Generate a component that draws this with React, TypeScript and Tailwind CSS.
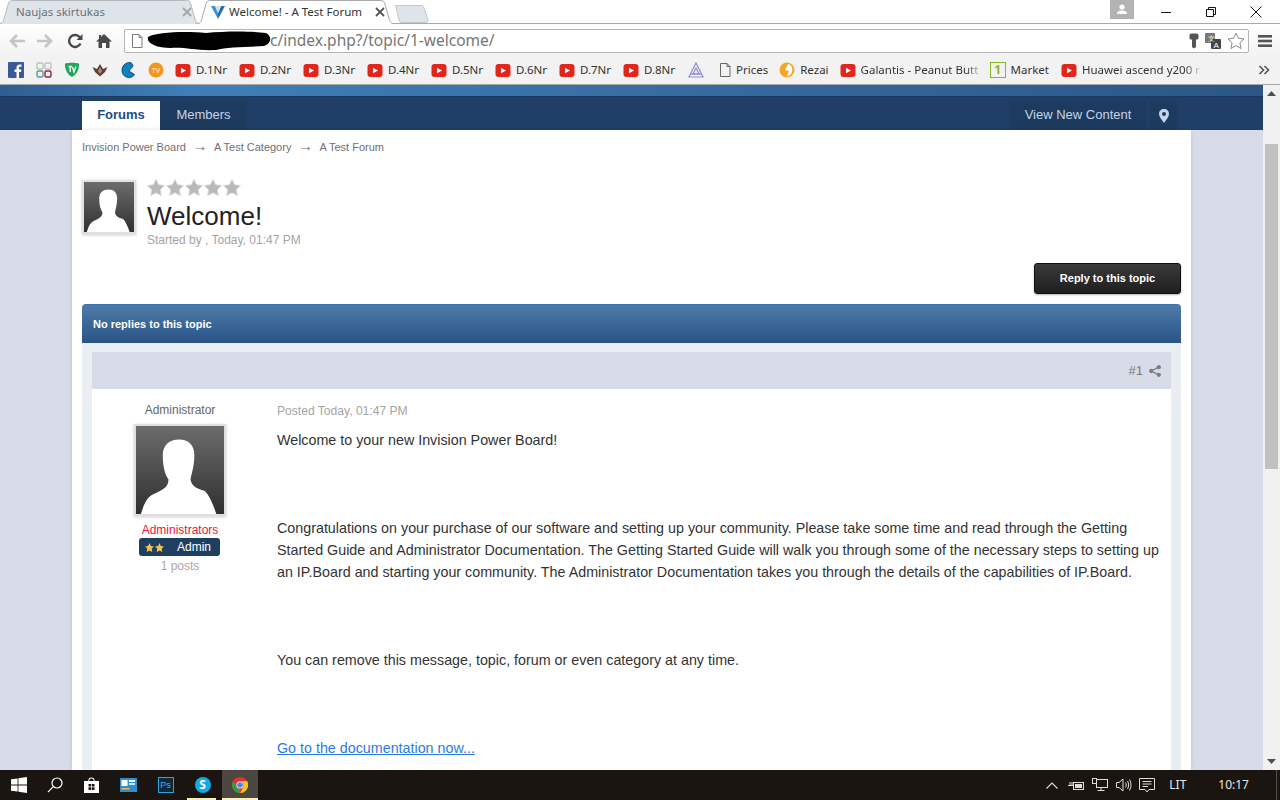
import React from 'react';

const UI = '"Noto Sans", "Open Sans", sans-serif';

const YouTubeIcon = () => (
  <svg width="16" height="13" viewBox="0 0 16 13" className="shrink-0">
    <rect x="0.5" y="0" width="15" height="13" rx="3" fill="#e1261c" />
    <path d="M6 3.8 L11 6.5 L6 9.2 Z" fill="#fff" />
  </svg>
);

const PageIcon = () => (
  <svg width="16" height="16" viewBox="0 0 16 16" className="shrink-0" fill="none" stroke="#666" strokeWidth="1">
    <path d="M3.5 1.5 H10 L13 4.5 V14.5 H3.5 Z M10 1.5 V4.5 H13" />
  </svg>
);

const Silhouette = ({ id }: { id: string }) => (
  <svg viewBox="0 0 92 92" className="block w-full h-full">
    <defs>
      <linearGradient id={id} x1="0" y1="0" x2="0" y2="1">
        <stop offset="0" stopColor="#6c6c6c" />
        <stop offset="1" stopColor="#303030" />
      </linearGradient>
    </defs>
    <rect width="92" height="92" fill={`url(#${id})`} />
    <path
      d="M5 92 C8 84 10 76 17 72 C24 68 34 66 34 56 C30 50 28 42 28 30 C28 20 35 14 45 14 C55 14 61 20 61 30 C61 42 58 50 57 56 C58 64 66 66 72 68 C76 72 80 80 84 92 Z"
      fill="#fff"
    />
  </svg>
);

const Star = () => (
  <svg width="18" height="17" viewBox="0 0 18 17">
    <path d="M9 0.5 L11.6 5.8 L17.5 6.6 L13.2 10.7 L14.3 16.5 L9 13.7 L3.7 16.5 L4.8 10.7 L0.5 6.6 L6.4 5.8 Z" fill="#b9b9b9" stroke="#d6d6d6" strokeWidth="1" />
  </svg>
);

const TabShape = ({ active }: { active?: boolean }) => (
  <svg className="absolute inset-0 w-full h-full" viewBox="0 0 200 24" preserveAspectRatio="none">
    <path
      d="M0 24 C5 24 6 22 7 18 L11 4 C12 1 13 0.5 16 0.5 H184 C187 0.5 188 1 189 4 L193 18 C194 22 195 24 200 24"
      fill={active ? '#ffffff' : '#dfe3ea'}
      stroke={active ? '#a8a8a8' : '#b4b8bf'}
      strokeWidth="1"
      vectorEffect="non-scaling-stroke"
    />
  </svg>
);

const CloseX = ({ color }: { color: string }) => (
  <svg width="10" height="10" viewBox="0 0 10 10" className="shrink-0" stroke={color} strokeWidth="1.8">
    <path d="M1 1 L9 9 M9 1 L1 9" />
  </svg>
);

const bookmarksLeft = [
  <svg key="fb" width="16" height="16" viewBox="0 0 16 16"><rect width="16" height="16" rx="1" fill="#3b5998" /><path d="M11 16 V10 H13 L13.4 7.5 H11 V6 C11 5.2 11.3 4.8 12.2 4.8 H13.5 V2.6 H11.6 C9.5 2.6 8.5 3.9 8.5 5.7 V7.5 H6.5 V10 H8.5 V16 Z" fill="#fff" /></svg>,
  <svg key="grid" width="16" height="16" viewBox="0 0 16 16" fill="none" strokeWidth="1.4"><rect x="1" y="1" width="6" height="6" rx="1.5" stroke="#b8c8a0" /><rect x="9" y="1" width="6" height="6" rx="1.5" stroke="#c0c0c0" /><rect x="1" y="9" width="6" height="6" rx="1.5" stroke="#5a9a9a" /><rect x="9" y="9" width="6" height="6" rx="1.5" stroke="#8a2a3a" /></svg>,
  <svg key="tv" width="16" height="16" viewBox="0 0 16 16"><path d="M1 1.5 C5 0.5 11 0.5 15 1.5 C15.5 8 12 13 8 15 C4 13 0.5 8 1 1.5 Z" fill="#1fa85a" /><path d="M4.5 4.5 H8 M6.2 4.5 V10 M8.5 5 L10 10 L12 4.5" stroke="#fff" strokeWidth="1.3" fill="none" /></svg>,
  <svg key="wing" width="16" height="16" viewBox="0 0 16 16"><path d="M0.5 5 L5 7 L8 2 L11 7 L15.5 5 L13 10 L8 14.5 L3 10 Z" fill="#5d4033" /><path d="M8 5 L10 9 L8 12 L6 9 Z" fill="#b08a70" /></svg>,
  <svg key="pac" width="16" height="16" viewBox="0 0 16 16"><path d="M10 0.5 C5 0.5 2 4 2 8.5 C2 13 5.5 15.5 9 15.5 C12 15.5 14 14 14.5 12.5 L9 9 L13 4 C12.5 2 11.5 0.5 10 0.5 Z" fill="#0d80c4" stroke="#063a5c" strokeWidth="0.8" /></svg>,
  <svg key="otv" width="16" height="16" viewBox="0 0 16 16"><circle cx="8" cy="8" r="7.5" fill="#f7941e" /><text x="8" y="10.5" textAnchor="middle" fontSize="6.5" fill="#fff" fontFamily="Liberation Sans, sans-serif">TV</text></svg>,
];

const dayBookmarks = ['D.1Nr', 'D.2Nr', 'D.3Nr', 'D.4Nr', 'D.5Nr', 'D.6Nr', 'D.7Nr', 'D.8Nr'];

const App: React.FC = () => {
  return (
    <div className="w-[1280px] h-[800px] flex flex-col overflow-hidden bg-white" style={{ fontFamily: '"Liberation Sans", Arial, sans-serif' }}>
      {/* window title + tabs */}
      <div className="h-[24px] shrink-0 flex items-end relative" style={{ fontFamily: UI }}>
        <div className="absolute left-0 right-0 bottom-0 h-px bg-[#a8a8a8]" />
        <div className="relative w-[205px] h-[24px] -ml-[3px] flex items-center pl-[19px] pr-[10px] text-[11.5px] text-[#6b7078]">
          <TabShape />
          <span className="relative flex-1">Naujas skirtukas</span>
          <span className="relative"><CloseX color="#a4a4a4" /></span>
        </div>
        <div className="relative w-[201px] h-[24px] -ml-[7px] flex items-center pl-[16px] pr-[11px] text-[11.5px] text-[#333]">
          <TabShape active />
          <svg width="14" height="14" viewBox="0 0 14 14" className="relative shrink-0">
            <path d="M0 1 H4 L7 8 V14 Z" fill="#3d8fd1" />
            <path d="M14 1 H10 L7 8 V14 Z" fill="#2b6ea6" />
            <path d="M4 1 H10 L7 8 Z" fill="#cfe3f3" />
          </svg>
          <span className="relative flex-1 ml-[4px] whitespace-nowrap">Welcome! - A Test Forum</span>
          <span className="relative"><CloseX color="#555" /></span>
        </div>
        <svg width="34" height="18" viewBox="0 0 34 18" className="mb-px ml-[-1px]">
          <path d="M0.5 0.5 H26 C28 0.5 28.5 1 29 3 L33 15 C33.3 17 32 17.5 30 17.5 H7 C5 17.5 4.5 17 4 15 Z" fill="#dfe3ea" stroke="#c4c8ce" />
        </svg>
        <div className="flex-1" />
        <div className="self-start w-[24px] h-[19px] bg-[#b3b3b3] flex items-center justify-center mr-[9px]">
          <svg width="12" height="11" viewBox="0 0 12 11" fill="#fff">
            <circle cx="6" cy="3" r="2.6" />
            <path d="M1 10 C1 7 3.5 6.5 6 6.5 C8.5 6.5 11 7 11 10 Z" />
          </svg>
        </div>
        <div className="self-start flex h-[24px] items-center pr-[2px]">
          <div className="w-[45px] flex justify-center">
            <svg width="10" height="10" viewBox="0 0 10 10" stroke="#111"><path d="M0 5.5 H10" /></svg>
          </div>
          <div className="w-[45px] flex justify-center">
            <svg width="10" height="10" viewBox="0 0 10 10" fill="none" stroke="#111"><path d="M0.5 2.5 H7.5 V9.5 H0.5 Z M2.5 2.5 V0.5 H9.5 V7.5 H7.5" /></svg>
          </div>
          <div className="w-[45px] flex justify-center">
            <svg width="12" height="12" viewBox="0 0 12 12" stroke="#111"><path d="M0.5 0.5 L11.5 11.5 M11.5 0.5 L0.5 11.5" /></svg>
          </div>
        </div>
      </div>

      {/* toolbar */}
      <div className="h-[34px] shrink-0 flex items-center bg-gradient-to-b from-white to-[#f2f2f2]" style={{ fontFamily: UI }}>
        <div className="flex items-center w-[124px] shrink-0 pl-[8px]">
          <svg width="18" height="16" viewBox="0 0 18 16" fill="none" stroke="#c4c4c4" strokeWidth="2.6"><path d="M17 8 H3 M9 2 L3 8 L9 14" /></svg>
          <svg width="18" height="16" viewBox="0 0 18 16" fill="none" stroke="#c4c4c4" strokeWidth="2.6" className="ml-[10px]"><path d="M1 8 H15 M9 2 L15 8 L9 14" /></svg>
          <svg width="16" height="16" viewBox="0 0 16 16" fill="none" stroke="#4a4a4a" strokeWidth="2.4" className="ml-[13px]"><path d="M13.5 10.5 A6 6 0 1 1 13 4.5" /><path d="M15.5 1 V7 H9.5 Z" fill="#4a4a4a" stroke="none" /></svg>
          <svg width="16" height="16" viewBox="0 0 16 16" fill="#4a4a4a" className="ml-[13px]"><path d="M8 1 L16 8.5 H13.5 V15 H10 V10 H6 V15 H2.5 V8.5 H0 L3 5.7 V2 H5 V3.8 Z" /></svg>
        </div>
        <div className="h-[24px] w-[1125px] shrink-0 border border-[#b4b4b4] rounded-[2px] bg-white flex items-center relative">
          <svg width="14" height="16" viewBox="0 0 14 16" className="ml-[5px] shrink-0" fill="none" stroke="#7a7a7a"><path d="M2.5 1.5 H9 L12 4.5 V14.5 H2.5 Z M9 1.5 V4.5 H12" /></svg>
          <svg width="126" height="20" viewBox="0 0 126 20" className="ml-[2px] shrink-0">
            <path d="M2 6 C10 1 40 0 60 2 C80 0 105 0 120 2 C126 5 126 12 118 15 C100 16 80 16 70 19 C50 20 40 16 25 17 C10 17 0 12 2 6 Z" fill="#000" />
          </svg>
          <span className="text-[15.5px] leading-none text-[#767676] -ml-[2px] whitespace-nowrap">c/index.php?/topic/1-welcome/</span>
          <div className="flex-1" />
          <div className="flex items-center gap-[6px] pr-[3px]">
            <svg width="10" height="16" viewBox="0 0 10 16" fill="#555"><path d="M2.5 0.5 H7.5 C8.8 0.5 9.5 1.2 9.5 2.5 V5 C9.5 6 8.8 6.5 7 6.5 V14 L5 15.5 L3 14 V6.5 C1.2 6.5 0.5 6 0.5 5 V2.5 C0.5 1.2 1.2 0.5 2.5 0.5 Z" /></svg>
            <svg width="16" height="16" viewBox="0 0 16 16"><rect x="0" y="0" width="10" height="10" rx="1" fill="#777" /><rect x="6" y="6" width="10" height="10" rx="1" fill="#444" /><text x="3" y="8" fontSize="7" fill="#fff" fontFamily="Liberation Sans, sans-serif">文</text><text x="8.5" y="14.5" fontSize="8" fill="#fff" fontFamily="Liberation Sans, sans-serif">A</text></svg>
            <svg width="18" height="18" viewBox="0 0 18 18" fill="#fff" stroke="#8a8a8a"><path d="M9 1 L11.4 6.3 L17 7 L12.9 10.8 L14 16.5 L9 13.7 L4 16.5 L5.1 10.8 L1 7 L6.6 6.3 Z" /></svg>
          </div>
        </div>
        <div className="flex-1 flex justify-center">
          <svg width="14" height="12" viewBox="0 0 14 12" fill="#555"><rect y="0" width="14" height="2.6" /><rect y="4.7" width="14" height="2.6" /><rect y="9.4" width="14" height="2.6" /></svg>
        </div>
      </div>

      {/* bookmarks bar */}
      <div className="h-[27px] shrink-0 flex items-center bg-[#f2f2f2] border-b border-[#a8a8a8] pl-[2px] pb-[2px] text-[11.5px] text-[#333] overflow-hidden" style={{ fontFamily: UI }}>
        {bookmarksLeft.map((icon, i) => (
          <div key={i} className="px-[6px] flex items-center">{icon}</div>
        ))}
        {dayBookmarks.map((label) => (
          <div key={label} className="w-[64px] shrink-0 flex items-center gap-[5px] pl-[5px]">
            <YouTubeIcon />
            <span>{label}</span>
          </div>
        ))}
        <div className="px-[6px] w-[29px] shrink-0">
          <svg width="16" height="16" viewBox="0 0 16 16" fill="none" stroke="#8d8fd0" strokeWidth="1.2"><path d="M8 1 L15 15 H1 Z M8 6 L11 12 H5 Z" /><path d="M3 12 H13" /></svg>
        </div>
        <div className="flex items-center gap-[3px] pl-[6px] pr-[5px] shrink-0"><PageIcon /><span>Prices</span></div>
        <div className="flex items-center gap-[5px] px-[6px] shrink-0">
          <svg width="16" height="16" viewBox="0 0 16 16"><circle cx="8" cy="8" r="7.5" fill="#f5a623" /><path d="M9 2 C13 3 14 7 13 10 C12 13 10 14 8 14 L10 9 L6 8 Z" fill="#fff" /></svg>
          <span>Rezai</span>
        </div>
        <div className="flex items-center gap-[5px] pl-[5px] w-[149px] shrink-0">
          <YouTubeIcon />
          <span className="flex-1 min-w-0 whitespace-nowrap [mask-image:linear-gradient(to_right,black_85%,transparent)]">Galantis - Peanut Butt</span>
        </div>
        <div className="flex items-center gap-[5px] px-[6px] shrink-0">
          <div className="w-[16px] h-[16px] border border-[#8db51e] text-[#8db51e] font-bold text-[12px] leading-[14px] text-center">1</div>
          <span>Market</span>
        </div>
        <div className="flex items-center gap-[5px] pl-[6px] w-[148px] shrink-0">
          <YouTubeIcon />
          <span className="flex-1 min-w-0 whitespace-nowrap [mask-image:linear-gradient(to_right,black_85%,transparent)]">Huawei ascend y200 r</span>
        </div>
        <div className="flex-1" />
        <svg width="12" height="10" viewBox="0 0 12 10" fill="none" stroke="#555" strokeWidth="1.6" className="mr-[10px] shrink-0"><path d="M1.5 1 L5.5 5 L1.5 9 M6.5 1 L10.5 5 L6.5 9" /></svg>
      </div>

      {/* page + scrollbar */}
      <div className="flex-1 min-h-0 flex">
        <div className="w-[1263px] shrink-0 flex flex-col bg-[#d8dce8] overflow-hidden">
          <div className="h-[11px] shrink-0 bg-gradient-to-r from-[#2f5e92] via-[#3f7fb9] via-15% to-[#2c5687]" />
          <div className="h-[34px] shrink-0 bg-[#1f3f68] border-t border-[#1b3759] flex items-end pl-[82px] pr-[85px] text-[13px]">
            <div className="h-[29px] w-[78px] pb-px bg-white text-[#1d4e86] font-bold flex items-center justify-center">Forums</div>
            <div className="h-[29px] w-[87px] pb-px bg-[#1d3a5f] text-[#c5d4e8] flex items-center justify-center">Members</div>
            <div className="flex-1" />
            <div className="h-[29px] w-[136px] pb-px bg-[#1d3a5f] text-[#c5d4e8] flex items-center justify-center">View New Content</div>
            <div className="h-[29px] w-[29px] ml-[3px] bg-[#1d3a5f] flex items-center justify-center">
              <svg width="10" height="14" viewBox="0 0 10 14"><path fillRule="evenodd" d="M5 0 C8 0 10 2 10 5 C10 8 7 11 5 14 C3 11 0 8 0 5 C0 2 2 0 5 0 Z M5 3 A2 2 0 1 0 5 7 A2 2 0 1 0 5 3 Z" fill="#c5d4e8" /></svg>
            </div>
          </div>

          <div className="flex-1 min-h-0 w-[1119px] ml-[72px] bg-white px-[10px] shadow-[0_0_4px_rgba(0,0,0,0.12)] flex flex-col">
            <div className="flex items-center h-[34px] shrink-0 text-[11px] text-[#707070]">
              <span>Invision Power Board</span>
              <span className="mx-[6.5px] -mt-[4px] text-[15px] leading-none">→</span>
              <span>A Test Category</span>
              <span className="mx-[6.5px] -mt-[4px] text-[15px] leading-none">→</span>
              <span>A Test Forum</span>
            </div>

            <div className="flex mt-[16px] shrink-0">
              <div className="w-[54px] h-[54px] border-2 border-[#e0e0e0] shadow-[0_1px_3px_rgba(0,0,0,0.2)]">
                <Silhouette id="sil-small" />
              </div>
              <div className="ml-[11px]">
                <div className="flex gap-px h-[18px] -mt-px">
                  <Star /><Star /><Star /><Star /><Star />
                </div>
                <h1 className="text-[26px] leading-[36px] pt-px text-[#222]">Welcome!</h1>
                <div className="text-[12px] leading-[13px] text-[#a4a4a4]">Started by , Today, 01:47 PM</div>
              </div>
            </div>

            <div className="flex justify-end mt-[16px] shrink-0">
              <div className="h-[31px] w-[147px] rounded-[3px] bg-gradient-to-b from-[#3a3a3a] to-[#1f1f1f] border border-[#111] text-white font-bold text-[11px] flex items-center justify-center shadow-[0_1px_2px_rgba(0,0,0,0.3)]">
                Reply to this topic
              </div>
            </div>

            <div className="h-[39px] mt-[10px] shrink-0 rounded-t-[4px] bg-gradient-to-b from-[#4d7ba8] to-[#2a5488] border-t border-[#3a74ad] text-white font-bold text-[11px] flex items-center pl-[11px]">
              No replies to this topic
            </div>

            <div className="flex-1 min-h-0 bg-[#e9eef3] pt-[9px] px-[10px] overflow-hidden">
              <div className="h-[37px] bg-[#d8dce8] flex items-center justify-end pr-[10px] gap-[6px] text-[#7a7a7a] text-[13px]">
                <span>#1</span>
                <svg width="12" height="12" viewBox="0 0 12 12" fill="#7a7f88" stroke="#7a7f88" strokeWidth="1.3"><circle cx="9.8" cy="2.2" r="1.5" /><circle cx="2.2" cy="6" r="1.5" /><circle cx="9.8" cy="9.8" r="1.5" /><path d="M9.8 2.2 L2.2 6 L9.8 9.8" fill="none" /></svg>
              </div>
              <div className="bg-white flex h-[400px]">
                <div className="w-[176px] shrink-0 flex flex-col items-center pt-[14px]">
                  <div className="text-[12px] leading-[15px] text-[#666]">Administrator</div>
                  <div className="w-[92px] h-[92px] mt-[6px] border-2 border-[#e0e0e0] shadow-[0_1px_3px_rgba(0,0,0,0.2)]">
                    <Silhouette id="sil-large" />
                  </div>
                  <div className="text-[12px] leading-[14px] text-[#f0103c] mt-[7px]">Administrators</div>
                  <div className="w-[81px] h-[18px] rounded-[3px] bg-[#1f3f60] flex items-center pl-[6px] mt-px mr-px">
                    <span className="flex gap-[1px] text-[#f5c542]">
                      <svg width="9" height="9" viewBox="0 0 10 10" fill="currentColor"><path d="M5 0 L6.5 3.3 L10 3.8 L7.5 6.2 L8.1 10 L5 8.2 L1.9 10 L2.5 6.2 L0 3.8 L3.5 3.3 Z" /></svg>
                      <svg width="9" height="9" viewBox="0 0 10 10" fill="currentColor"><path d="M5 0 L6.5 3.3 L10 3.8 L7.5 6.2 L8.1 10 L5 8.2 L1.9 10 L2.5 6.2 L0 3.8 L3.5 3.3 Z" /></svg>
                    </span>
                    <span className="text-[12px] text-white ml-[13px]">Admin</span>
                  </div>
                  <div className="text-[12px] leading-[14px] mt-[3px] text-[#a8a8a8]">1 posts</div>
                </div>
                <div className="flex-1 pl-[9px] pr-[10px] pt-[15px] text-[14.3px] leading-[22px] text-[#333]">
                  <div className="text-[12.1px] leading-[15px] text-[#a4a4a4]">Posted Today, 01:47 PM</div>
                  <p className="mt-[10px] mb-[66px]">Welcome to your new Invision Power Board!</p>
                  <p className="mb-[66px]">
                    Congratulations on your purchase of our software and setting up your community. Please take some time and read through the Getting Started Guide and Administrator Documentation. The Getting Started Guide will walk you through some of the necessary steps to setting up an IP.Board and starting your community. The Administrator Documentation takes you through the details of the capabilities of IP.Board.
                  </p>
                  <p className="mb-[66px]">You can remove this message, topic, forum or even category at any time.</p>
                  <a className="text-[#2a7ae2] underline">Go to the documentation now...</a>
                </div>
              </div>
            </div>
          </div>
        </div>

        {/* scrollbar */}
        <div className="flex-1 bg-[#f1f1f1] flex flex-col items-center">
          <div className="h-[17px] shrink-0 flex items-center justify-center">
            <svg width="9" height="5" viewBox="0 0 9 5" fill="#505050"><path d="M4.5 0 L9 5 H0 Z" /></svg>
          </div>
          <div className="h-[42px] shrink-0" />
          <div className="w-[13px] h-[325px] shrink-0 bg-[#c1c1c1]" />
          <div className="flex-1" />
          <div className="h-[17px] shrink-0 flex items-center justify-center">
            <svg width="9" height="5" viewBox="0 0 9 5" fill="#505050"><path d="M0 0 H9 L4.5 5 Z" /></svg>
          </div>
        </div>
      </div>

      {/* taskbar */}
      <div className="h-[30px] shrink-0 bg-[#1a1511] flex items-stretch text-[#e8e8e8] text-[12px]" style={{ fontFamily: UI }}>
        <div className="w-[37px] flex items-center justify-center">
          <svg width="16" height="16" viewBox="0 0 16 16" fill="#fff"><path d="M0 2.3 L6.6 1.4 V7.6 H0 Z M7.4 1.3 L16 0 V7.6 H7.4 Z M0 8.4 H6.6 V14.6 L0 13.7 Z M7.4 8.4 H16 V16 L7.4 14.7 Z" /></svg>
        </div>
        <div className="w-[36px] flex items-center justify-center">
          <svg width="16" height="16" viewBox="0 0 16 16" fill="none" stroke="#fff" strokeWidth="1.2"><circle cx="10" cy="6" r="5" /><path d="M6.3 9.7 L1 15" /></svg>
        </div>
        <div className="w-[37px] flex items-center justify-center">
          <svg width="15" height="16" viewBox="0 0 15 16" fill="#fff"><path d="M0 4 H4.3 C4.3 1.5 5.5 0.5 7.5 0.5 C9.5 0.5 10.7 1.5 10.7 4 H15 V16 H0 Z M5.3 4 H9.7 C9.7 2.3 9 1.5 7.5 1.5 C6 1.5 5.3 2.3 5.3 4 Z" /><path d="M4.5 7 H7.2 V9.6 H4.5 Z M7.9 7 H10.5 V9.6 H7.9 Z M4.5 10.3 H7.2 V13 H4.5 Z M7.9 10.3 H10.5 V13 H7.9 Z" fill="#1a1511" /></svg>
        </div>
        <div className="w-[37px] flex items-center justify-center">
          <svg width="17" height="14" viewBox="0 0 17 14"><rect width="17" height="14" fill="#2e8ecf" /><rect x="1.5" y="2" width="6" height="6" fill="#fff" /><rect x="9" y="2" width="6" height="2" fill="#fff" /><rect x="9" y="5" width="6" height="2" fill="#cfe6f6" /><rect x="1.5" y="10" width="8" height="1.5" fill="#f5b642" /></svg>
        </div>
        <div className="w-[37px] flex items-center justify-center">
          <div className="w-[16px] h-[16px] border border-[#2ea3dc] bg-[#0e2a3a] text-[#3db5ea] text-[9px] leading-[14px] text-center" style={{ fontFamily: '"Liberation Sans", sans-serif' }}>Ps</div>
        </div>
        <div className="w-[37px] flex items-center justify-center relative">
          <div className="w-[16px] h-[16px] rounded-full bg-[#14a8e6] text-white font-bold text-[12px] leading-[16px] text-center">S</div>
          <div className="absolute bottom-0 left-[3px] right-[5px] h-[2px] bg-[#fdeeb8]" />
        </div>
        <div className="w-[36px] ml-[1px] flex items-center justify-center relative bg-[#4b4640]">
          <svg width="16" height="16" viewBox="0 0 16 16">
            <circle cx="8" cy="8" r="8" fill="#e0352b" />
            <path d="M8 16 A8 8 0 0 1 1.1 4 L4.6 10 A4 4 0 0 0 8 12 Z" fill="#2e9e4a" />
            <path d="M8 4 H15 A8 8 0 0 1 8 16 L11.5 10 A4 4 0 0 0 8 4 Z" fill="#f8c51c" />
            <circle cx="8" cy="8" r="3.6" fill="#fff" />
            <circle cx="8" cy="8" r="2.8" fill="#4a86e8" />
          </svg>
          <div className="absolute bottom-0 left-0 right-0 h-[2px] bg-[#fdeeb8]" />
        </div>
        <div className="flex-1" />
        <div className="flex items-center">
          <svg width="12" height="7" viewBox="0 0 12 7" fill="none" stroke="#ddd" strokeWidth="1.1" className="mr-[10px]"><path d="M0.5 6.5 L6 1 L11.5 6.5" /></svg>
          <svg width="16" height="11" viewBox="0 0 16 11" fill="none" stroke="#ddd" className="mr-[8px]"><rect x="5.5" y="2.5" width="10" height="7" /><rect x="7" y="4" width="7" height="4" fill="#ddd" stroke="none" /><path d="M0 5.5 H5 M2 2 V5 M4 2 V5" /></svg>
          <svg width="16" height="14" viewBox="0 0 16 14" fill="none" stroke="#ddd" className="mr-[8px]"><rect x="4.5" y="1.5" width="11" height="8" /><path d="M9 9.5 V12.5 M5.5 12.5 H12.5" /><rect x="0.5" y="0.5" width="4" height="5" fill="#1a1511" /></svg>
          <svg width="16" height="14" viewBox="0 0 16 14" fill="none" stroke="#ddd" className="mr-[7px]"><path d="M0.5 4.5 H3 L7 1 V13 L3 9.5 H0.5 Z M9.5 4.5 C10.5 6 10.5 8 9.5 9.5 M11.5 3 C13 5.5 13 8.5 11.5 11 M13.5 1.5 C15.5 5 15.5 9 13.5 12.5" /></svg>
          <svg width="16" height="16" viewBox="0 0 16 16" fill="none" stroke="#ddd" className="mr-[14px]"><path d="M0.5 1.5 H15.5 V12.5 H10 L8 15 L6 12.5 H0.5 Z M3.5 4.5 H12.5 M3.5 7 H12.5 M3.5 9.5 H9" /></svg>
          <span className="w-[16px] whitespace-nowrap">LIT</span>
          <span className="ml-[33px] whitespace-nowrap">10:17</span>
          <div className="w-px h-full bg-[#55504a] ml-[27px]" />
          <div className="w-[3px]" />
        </div>
      </div>
    </div>
  );
};

export default App;
